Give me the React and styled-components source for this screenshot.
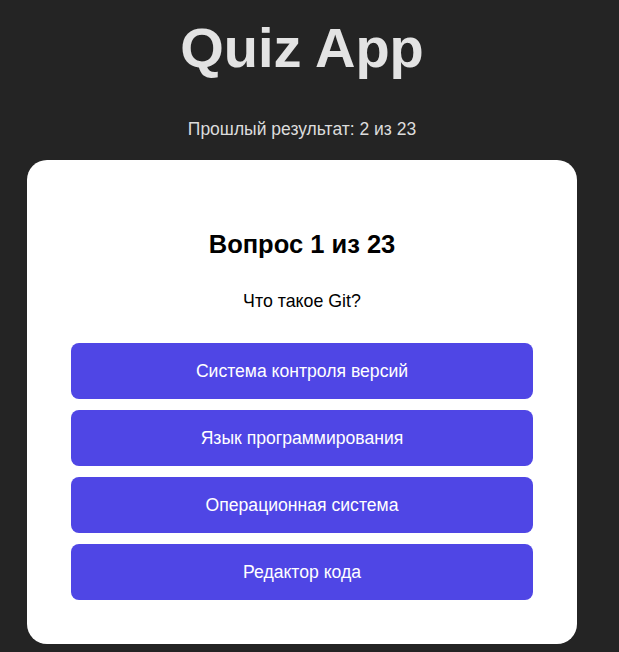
import React from "react";
import styled, { createGlobalStyle } from "styled-components";

const GlobalStyle = createGlobalStyle`
  html, body {
    margin: 0;
    padding: 0;
    background: #242424;
  }
  body {
    font-family: "Liberation Sans", Arial, sans-serif;
    color: rgba(255, 255, 255, 0.87);
    min-height: 100vh;
  }
`;

const Page = styled.div`
  display: flex;
  flex-direction: column;
  align-items: center;
  padding: 15px 15px 0 0;
`;

const Title = styled.h1`
  margin: 0;
  font-size: 56px;
  font-weight: 700;
  line-height: normal;
  color: #e3e3e3;
`;

const LastResult = styled.p`
  margin: 39px 0 0;
  font-size: 17.5px;
  line-height: normal;
  color: #dcdcdc;
`;

const Card = styled.div`
  box-sizing: border-box;
  width: 550px;
  margin-top: 20px;
  padding: 70px 44px 44px;
  background: #ffffff;
  border-radius: 20px;
  text-align: center;
  color: #000;
`;

const QuestionCounter = styled.h2`
  margin: 0;
  font-size: 25.5px;
  font-weight: 700;
  line-height: normal;
`;

const QuestionText = styled.p`
  margin: 32px 0 0;
  font-size: 17.8px;
  line-height: normal;
`;

const Answers = styled.div`
  display: flex;
  flex-direction: column;
  gap: 11px;
  margin-top: 31px;
`;

const AnswerButton = styled.button`
  height: 56px;
  border: none;
  border-radius: 8px;
  background: #4f46e5;
  color: #ffffff;
  font-family: "Liberation Sans", Arial, sans-serif;
  font-size: 17.6px;
  cursor: pointer;
`;

const answers = [
  "Система контроля версий",
  "Язык программирования",
  "Операционная система",
  "Редактор кода",
];

export default function App() {
  return (
    <>
      <GlobalStyle />
      <Page>
        <Title>Quiz App</Title>
        <LastResult>Прошлый результат: 2 из 23</LastResult>
        <Card>
          <QuestionCounter>Вопрос 1 из 23</QuestionCounter>
          <QuestionText>Что такое Git?</QuestionText>
          <Answers>
            {answers.map((a) => (
              <AnswerButton key={a}>{a}</AnswerButton>
            ))}
          </Answers>
        </Card>
      </Page>
    </>
  );
}
